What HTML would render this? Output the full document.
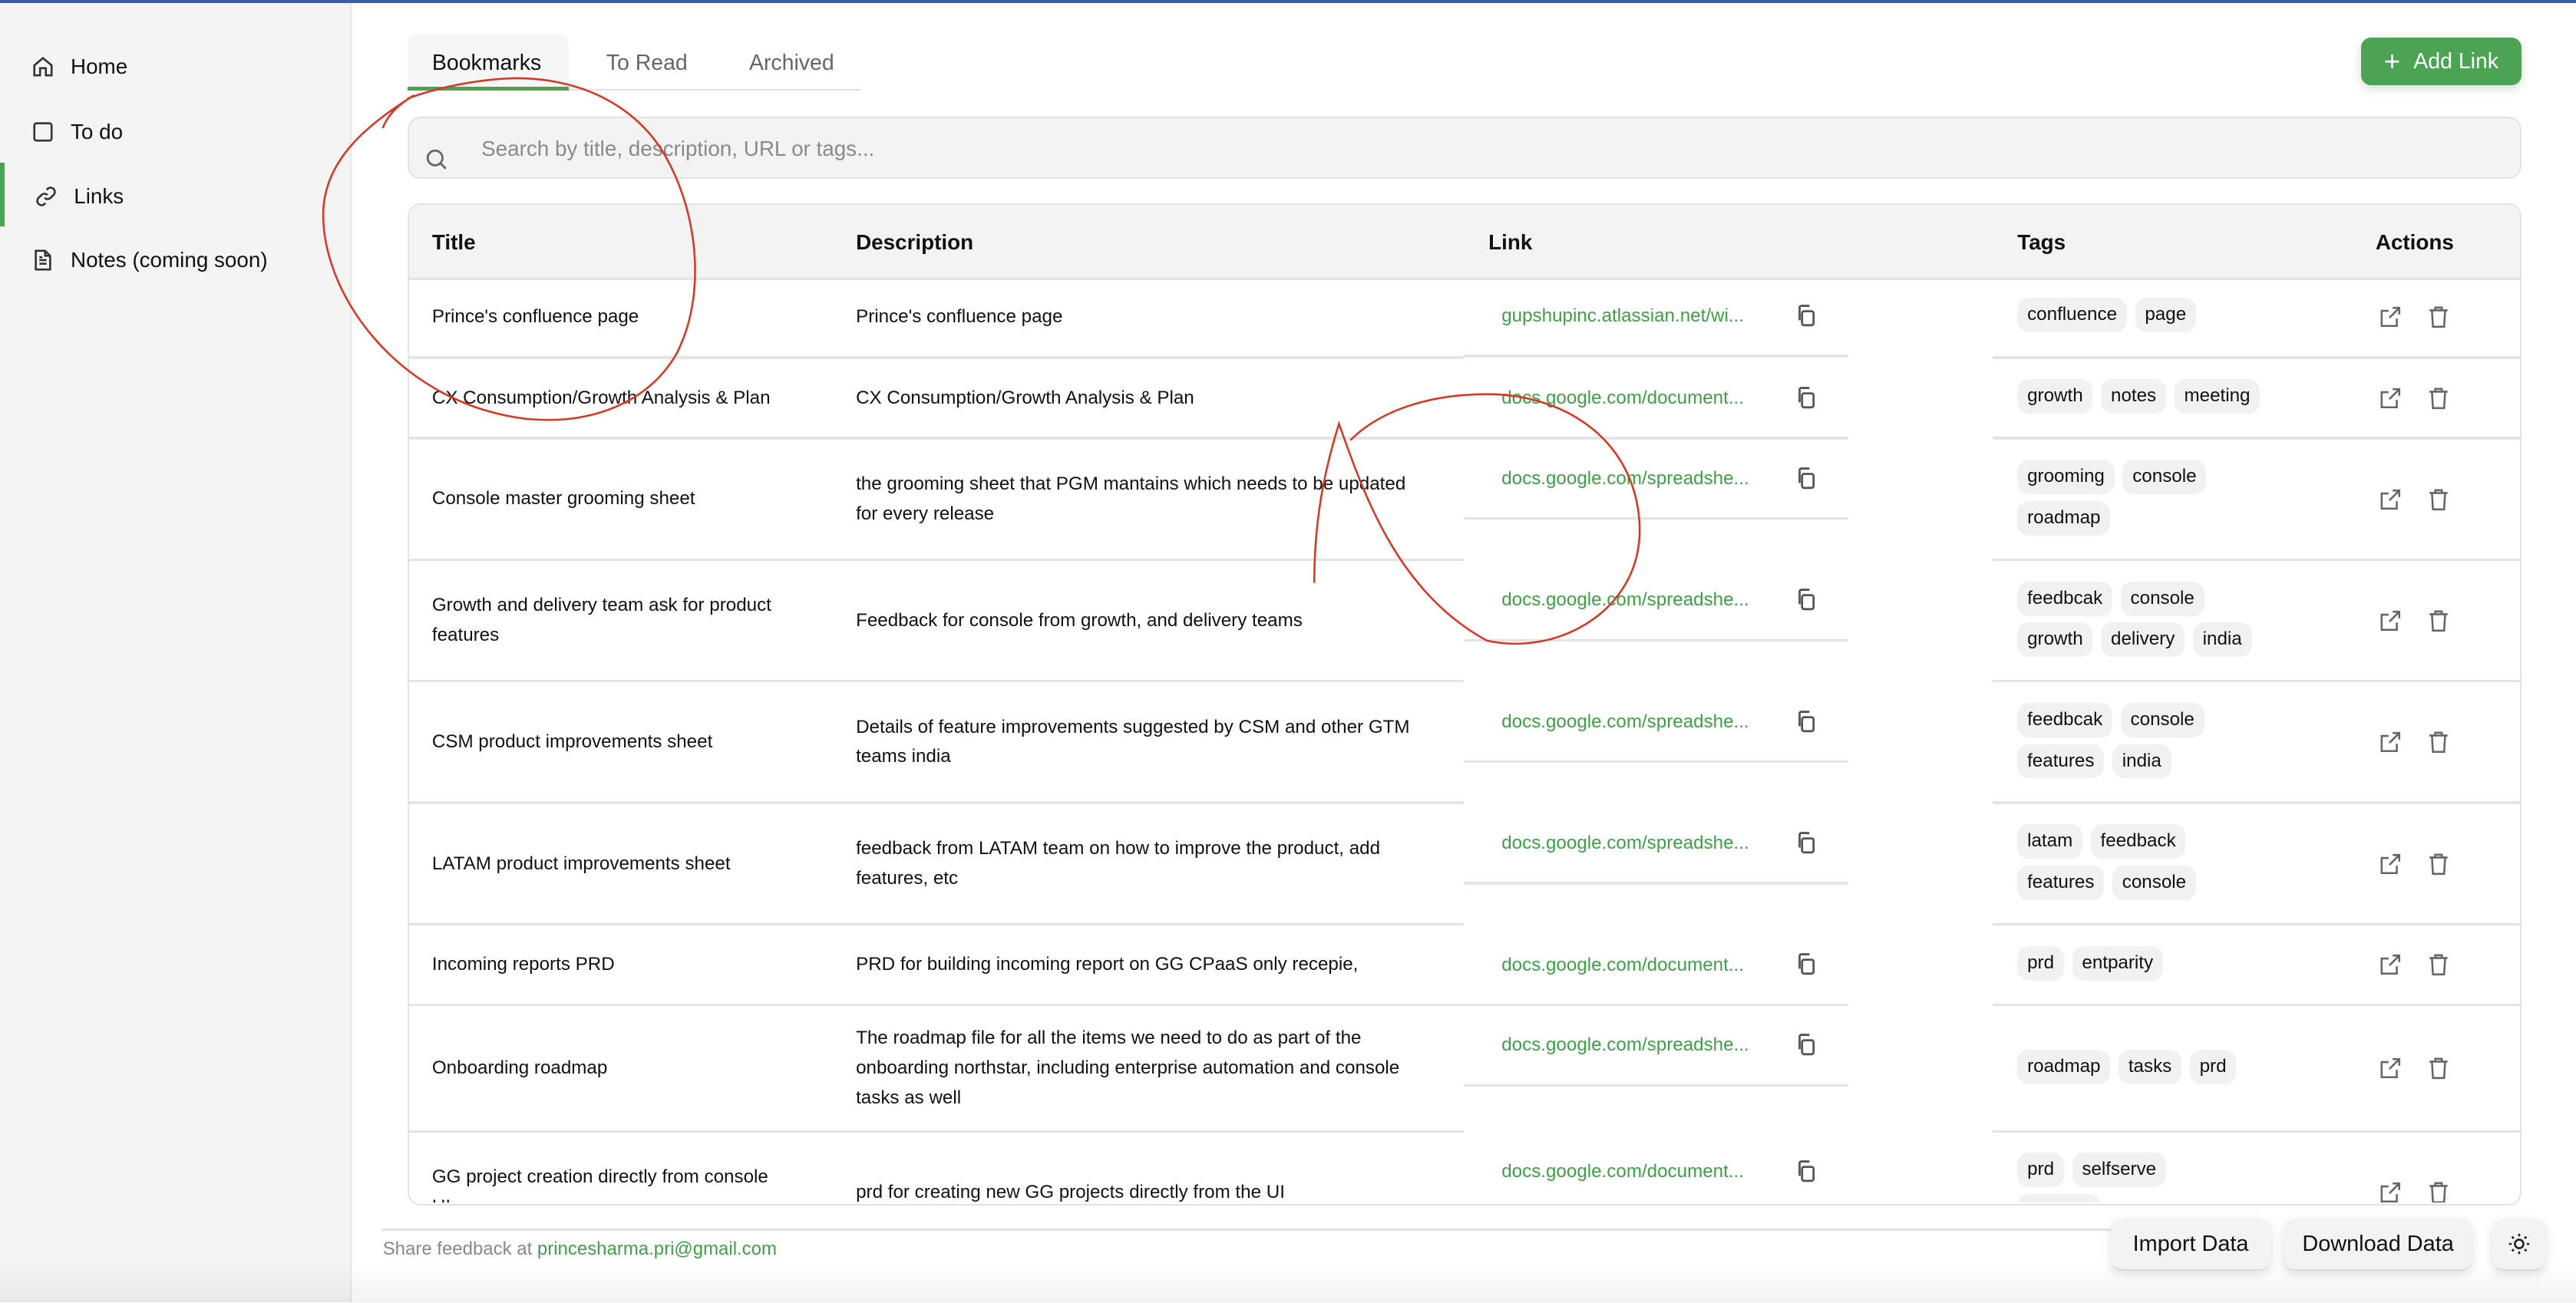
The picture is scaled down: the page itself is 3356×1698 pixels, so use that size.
<!DOCTYPE html>
<html><head><meta charset="utf-8"><style>
html,body{margin:0;padding:0;background:#fff;width:3356px;height:1698px;overflow:hidden}
#w{position:relative;width:1568px;height:793px;zoom:2.1403;font-family:"Liberation Sans",sans-serif;color:#111;overflow:hidden}
.abs{position:absolute}
.side{left:0;top:0;width:213px;height:793px;background:#f4f4f4;border-right:1px solid #e6e6e6}
.ni{position:absolute;left:19px;font-size:13px;display:flex;align-items:center;gap:10px;color:#111}
.ni svg{width:14px;height:14px}
.row{position:absolute;left:248px;width:1287px}
.cell{position:absolute;display:flex;align-items:center;font-size:11.3px;line-height:18px}
.tags{position:absolute;left:980px;width:152px;display:flex;flex-wrap:wrap;gap:4px 5px;align-content:center}
.tag{background:#f1f1f1;border-radius:7px;padding:0 6px;height:21px;line-height:21px;font-size:11.3px}
.link{position:absolute;left:666px;color:#3f9f47;font-size:11.3px}
.cp{position:absolute;left:844px}
.act{position:absolute;left:1200px;display:flex;gap:16px}
.hl{position:absolute;height:1.5px;background:#e4e4e4}
.btn{position:absolute;background:#f3f3f3;border-radius:7px;box-shadow:0 2px 6px rgba(0,0,0,.12);font-size:13.5px;display:flex;align-items:center;justify-content:center;border-bottom:1px solid #ddd}
</style></head><body><div id="w">
<div class="abs side"></div>
<div class="abs" style="left:0;top:0;width:1568px;height:2px;background:#3a5fa8"></div>
<div class="abs" style="left:0;top:99px;width:3px;height:39px;background:#4ba454"></div>
<div class="ni" style="top:33px"><svg viewBox="0 0 16 16" fill="none" stroke="#333" stroke-width="1.4"><path d="M2 7L8 2l6 5v7H10V9H6v5H2z"/></svg>Home</div>
<div class="ni" style="top:73px"><svg viewBox="0 0 16 16" fill="none" stroke="#333" stroke-width="1.4"><rect x="2" y="2" width="12" height="12" rx="1.5"/></svg>To do</div>
<div class="ni" style="top:112px;left:21px"><svg viewBox="0 0 16 16" fill="none" stroke="#333" stroke-width="1.4"><path d="M7 9a3 3 0 0 0 4.2 0l2.3-2.3a3 3 0 0 0-4.2-4.2L8.4 3.4M9 7a3 3 0 0 0-4.2 0L2.5 9.3a3 3 0 0 0 4.2 4.2l.9-.9"/></svg>Links</div>
<div class="ni" style="top:151px"><svg viewBox="0 0 16 16" fill="none" stroke="#333" stroke-width="1.4"><path d="M3 1.5h6.5L13 5v9.5H3z M9.5 1.5V5H13 M5.5 8h5 M5.5 10.5h5 M5.5 6h2"/></svg>Notes (coming soon)</div>

<div class="abs" style="left:248px;top:21px;width:98px;height:33px;background:#f6f6f6;border-radius:6px 6px 0 0"></div>
<div class="abs" style="left:248px;top:54px;width:276px;height:1px;background:#e2e2e2"></div>
<div class="abs" style="left:248px;top:53px;width:98px;height:2px;background:#4ba454"></div>
<div class="abs" style="left:263px;top:31px;font-size:13.3px;color:#111">Bookmarks</div>
<div class="abs" style="left:369px;top:31px;font-size:13.3px;color:#666">To Read</div>
<div class="abs" style="left:456px;top:31px;font-size:13.3px;color:#666">Archived</div>
<div class="abs" style="left:1437px;top:23px;width:98px;height:29px;background:#4ba454;border-radius:6px;color:#fff;font-size:13.3px;display:flex;align-items:center;justify-content:center;gap:8px;box-shadow:0 2px 6px rgba(0,0,0,.15)"><span style="font-size:17px;font-weight:300">+</span>Add Link</div>

<div class="abs" style="left:248px;top:71px;width:1285px;height:36px;background:#f3f3f3;border:1px solid #e3e3e3;border-radius:8px"></div>
<svg class="abs" style="left:259px;top:90px" width="14" height="14" viewBox="0 0 14 14" fill="none" stroke="#666" stroke-width="1.3"><circle cx="6" cy="6" r="4.5"/><path d="M9.3 9.3L12.5 12.5"/></svg>
<div class="abs" style="left:293px;top:83px;font-size:13px;color:#8a8a8a">Search by title, description, URL or tags...</div>

<div class="abs" style="left:248px;top:124px;width:1285px;height:608px;border:1px solid #e3e3e3;border-radius:8px;overflow:hidden">
<div style="height:44px;background:#f3f3f3;border-bottom:1.5px solid #e3e3e3"></div>
</div>
<div class="abs" style="top:140px;left:263px;font-size:13px;font-weight:bold">Title</div>
<div class="abs" style="top:140px;left:521px;font-size:13px;font-weight:bold">Description</div>
<div class="abs" style="top:140px;left:906px;font-size:13px;font-weight:bold">Link</div>
<div class="abs" style="top:140px;left:1228px;font-size:13px;font-weight:bold">Tags</div>
<div class="abs" style="top:140px;left:1446px;font-size:13px;font-weight:bold">Actions</div>

<div class="abs" style="left:249px;top:169px;width:1285px;height:563px;overflow:hidden">
<div id="rows" style="position:relative;left:-249px;top:-169px">
</div></div>

<div class="abs" style="left:232px;top:748px;width:1060px;height:1.5px;background:#e4e4e4"></div>
<div class="abs" style="left:233px;top:754px;font-size:11.2px;color:#888">Share feedback at <span style="color:#3f9f47">princesharma.pri@gmail.com</span></div>
<div class="btn" style="left:1285px;top:742px;width:97px;height:31px">Import Data</div>
<div class="btn" style="left:1390px;top:742px;width:115px;height:31px">Download Data</div>
<div class="btn" style="left:1517px;top:742px;width:33px;height:31px"><svg width="14" height="14" viewBox="0 0 14 14" fill="none" stroke="#222" stroke-width="1.2"><circle cx="7" cy="7" r="2.6"/><path d="M7 .8v1.6M7 11.6v1.6M.8 7h1.6M11.6 7h1.6M2.6 2.6l1.1 1.1M10.3 10.3l1.1 1.1M2.6 11.4l1.1-1.1M10.3 3.7l1.1-1.1"/></svg></div>
<div class="abs" style="left:0;top:770px;width:1568px;height:23px;background:linear-gradient(rgba(0,0,0,0),rgba(0,0,0,.05));pointer-events:none"></div>

<svg class="abs" style="left:0;top:0" width="1568" height="793" fill="none" stroke="#d23a26" stroke-width="1.2">
<path d="M233 78 C236 70 242 64 252 58 C 225 75 200 95 197 125 C 193 175 240 245 320 255 C 360 259 395 245 412 215 C 430 180 425 130 405 95 C 385 60 345 45 305 48 C 280 50 262 55 248 60"/>
<path d="M800 355 C 800 320 805 290 815 258 C 830 300 850 360 905 390 C 950 400 1000 370 998 320 C 996 270 955 240 905 240 C 870 240 840 250 822 268"/>
</svg>
<script>
var rows=[
[168,218,"Prince's confluence page","Prince's confluence page","gupshupinc.atlassian.net/wi...",["confluence","page"]],
[218,267,"CX Consumption/Growth Analysis &amp; Plan","CX Consumption/Growth Analysis &amp; Plan","docs.google.com/document...",["growth","notes","meeting"]],
[267,341,"Console master grooming sheet","the grooming sheet that PGM mantains which needs to be updated for every release","docs.google.com/spreadshe...",["grooming","console","roadmap"]],
[341,415,"Growth and delivery team ask for product features","Feedback for console from growth, and delivery teams","docs.google.com/spreadshe...",["feedbcak","console","growth","delivery","india"]],
[415,489,"CSM product improvements sheet","Details of feature improvements suggested by CSM and other GTM teams india","docs.google.com/spreadshe...",["feedbcak","console","features","india"]],
[489,563,"LATAM product improvements sheet","feedback from LATAM team on how to improve the product, add features, etc","docs.google.com/spreadshe...",["latam","feedback","features","console"]],
[563,612,"Incoming reports PRD","PRD for building incoming report on GG CPaaS only recepie,","docs.google.com/document...",["prd","entparity"]],
[612,689,"Onboarding roadmap","The roadmap file for all the items we need to do as part of the onboarding northstar, including enterprise automation and console tasks as well","docs.google.com/spreadshe...",["roadmap","tasks","prd"]],
[689,763,"GG project creation directly from console UI","prd for creating new GG projects directly from the UI","docs.google.com/document...",["prd","selfserve","console"]]
];
var cp='<svg width="14" height="14" viewBox="0 0 14 14" fill="none" stroke="#555" stroke-width="1.3"><rect x="5" y="4.5" width="7" height="8.5" rx="1.2"/><path d="M3.5 10V2.2a1 1 0 0 1 1-1H9.5"/></svg>';
var ex='<svg width="14" height="14" viewBox="0 0 14 14" fill="none" stroke="#666" stroke-width="1.2"><path d="M11 8v4.5H1.8V3.3H6M8.5 1.5h4v4M12.5 1.5L6.5 7.5"/></svg>';
var tr='<svg width="13" height="14" viewBox="0 0 13 14" fill="none" stroke="#666" stroke-width="1.2"><path d="M1 3h11M4.5 3V1.3h4V3M2.5 3l.6 10h6.8l.6-10"/></svg>';
var h='';
rows.forEach(function(r,i){
 var t=r[0],b=r[1],H=b-t;
 h+='<div class="row" style="top:'+t+'px;height:'+H+'px">';
 h+='<div class="cell" style="left:15px;width:210px;top:0;height:'+H+'px">'+r[2]+'</div>';
 h+='<div class="cell" style="left:273px;width:350px;top:0;height:'+H+'px">'+r[3]+'</div>';
 h+='<div class="link" style="top:18px">'+r[4]+'</div>';
 h+='<div class="cp" style="top:17px">'+cp+'</div>';
 var tt='';r[5].forEach(function(x){tt+='<span class="tag">'+x+'</span>'});
 var tw=(i==8)?110:152;
 h+='<div class="tags" style="top:0;height:'+(H-2)+'px;width:'+tw+'px">'+tt+'</div>';
 h+='<div class="act" style="top:'+(H/2-7)+'px">'+ex+tr+'</div>';
 h+='</div>';
 if(i<8){
  h+='<div class="hl" style="left:248px;top:'+(b-1)+'px;width:643px"></div>';
  h+='<div class="hl" style="left:1213px;top:'+(b-1)+'px;width:322px"></div>';
  h+='<div class="hl" style="left:891px;top:'+(t+48)+'px;width:234px"></div>';
 }
});
document.getElementById('rows').innerHTML=h;
</script>
</div></body></html>
